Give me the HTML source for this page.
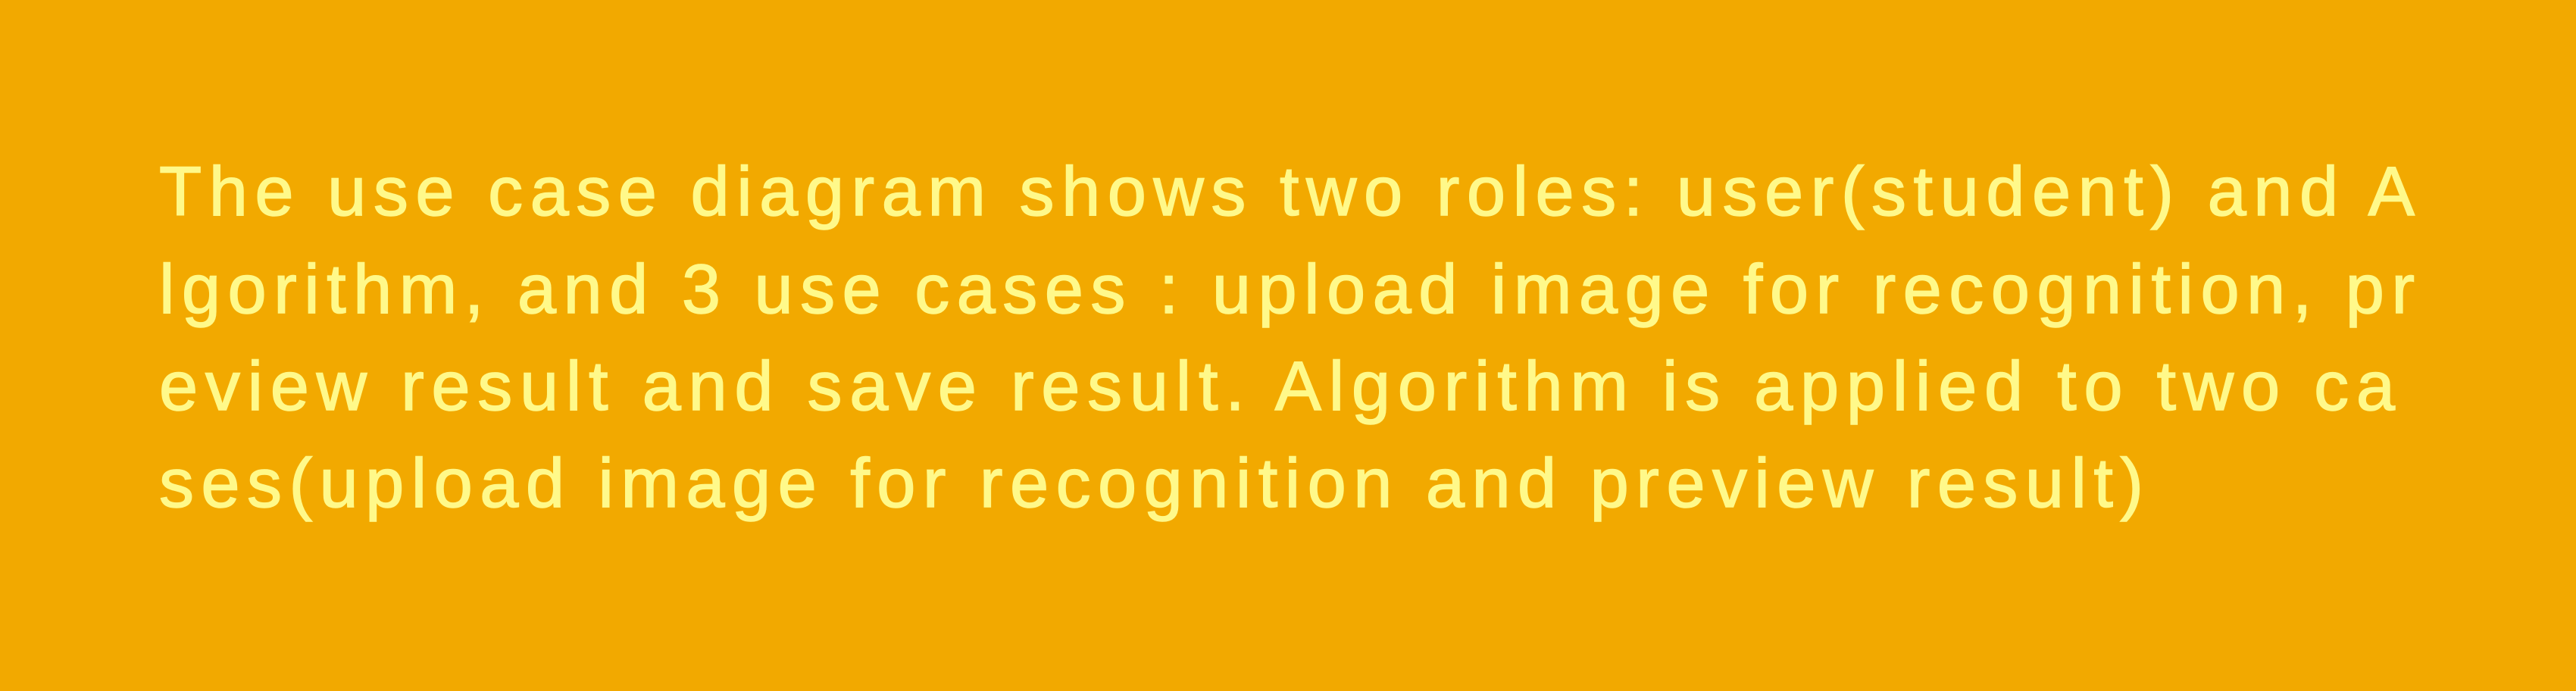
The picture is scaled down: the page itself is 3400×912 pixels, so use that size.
<!DOCTYPE html>
<html><head><meta charset="utf-8"><style>
html,body{margin:0;padding:0;background:#F2A900;width:3400px;height:912px;overflow:hidden}
svg{display:block}
text{font-family:"Liberation Sans",sans-serif;font-size:92px;fill:#FFF98A;stroke:#FFF98A;stroke-width:1.5px}
</style></head><body>
<svg width="3400" height="912" viewBox="0 0 3400 912">
<rect width="3400" height="912" fill="#F2A900"/>
<text x="210" y="284" textLength="2977" lengthAdjust="spacing">The use case diagram shows two roles: user(student) and A</text>
<text x="210" y="413" textLength="2977" lengthAdjust="spacing">lgorithm, and 3 use cases : upload image for recognition, pr</text>
<text x="210" y="541" textLength="2951" lengthAdjust="spacing">eview result and save result. Algorithm is applied to two ca</text>
<text x="210" y="669" textLength="2619" lengthAdjust="spacing">ses(upload image for recognition and preview result)</text>
</svg>
</body></html>
